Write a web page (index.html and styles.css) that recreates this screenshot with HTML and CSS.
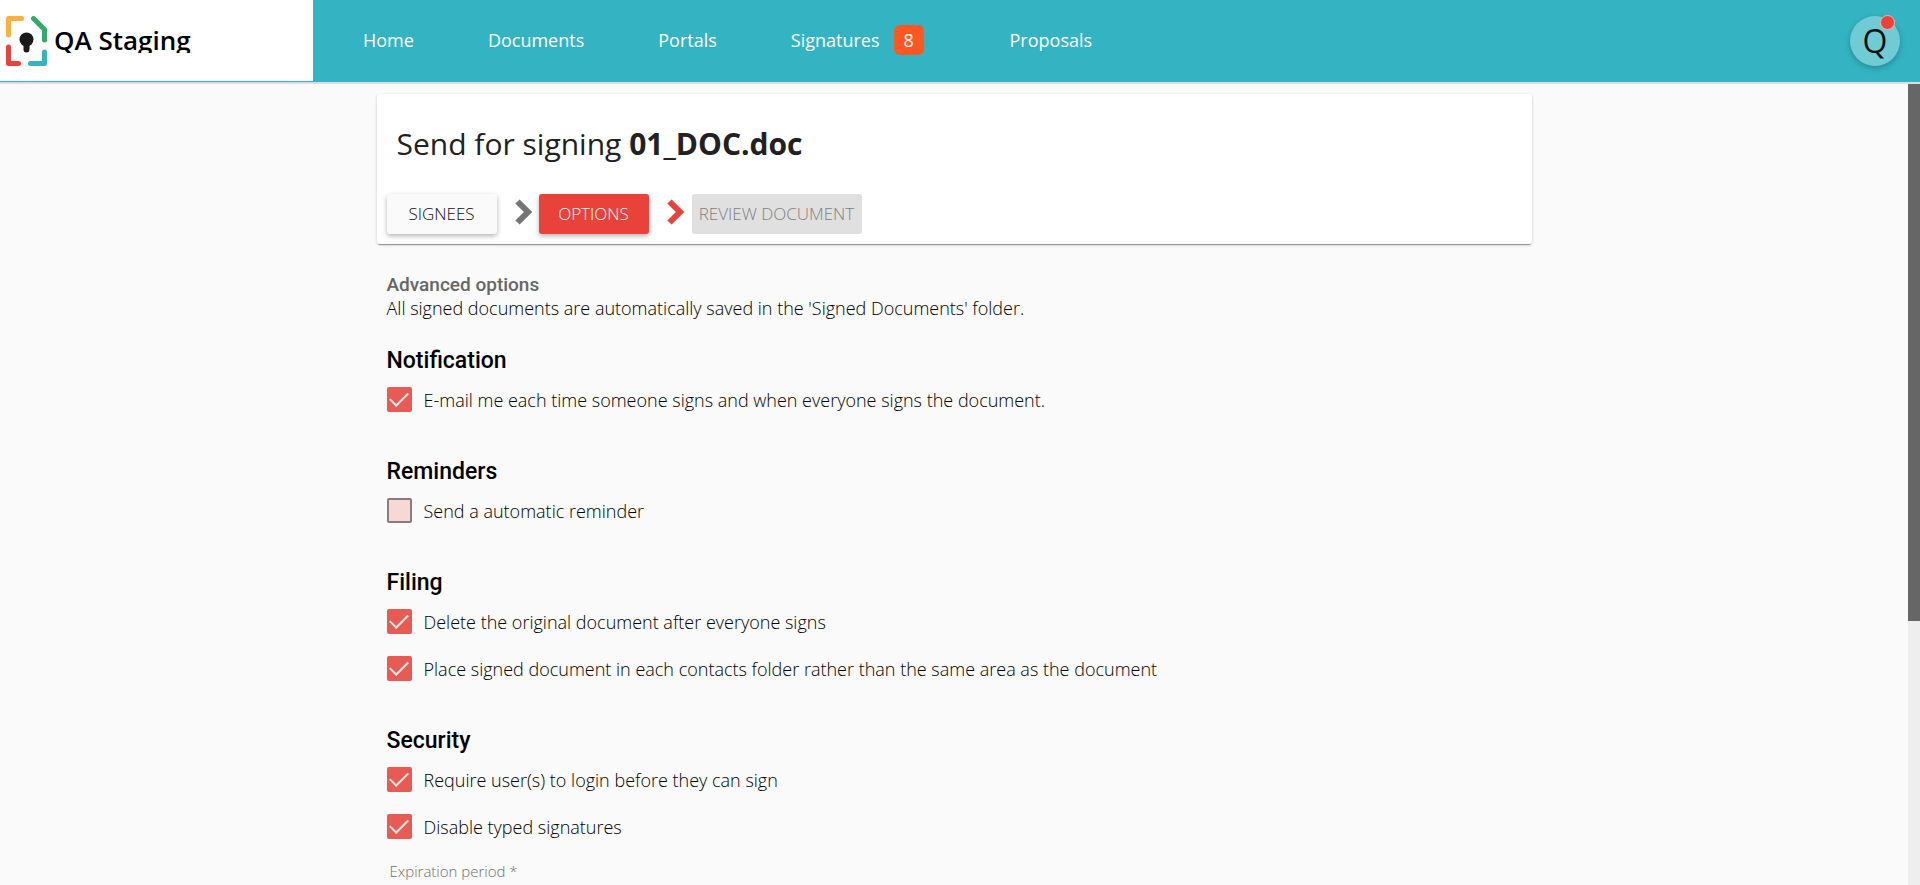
FILE: index.html
```html
<!DOCTYPE html>
<html lang="en">
<head>
<meta charset="utf-8">
<title>QA Staging - Send for signing</title>
<link rel="stylesheet" href="styles.css">
</head>
<body>
<header class="topbar">
  <a class="brand" href="#">
    <svg class="brand-logo" width="42" height="50" viewBox="0 0 42 50" fill="none" stroke-width="5" stroke-linecap="round" stroke-linejoin="round" aria-hidden="true">
      <path d="M2.500 19V2.500H15.500" stroke="#fbb040"/>
      <path d="M27.500 2.500L38.500 13.500V24" stroke="#2fac66"/>
      <path d="M2.500 31V47.500H12.500" stroke="#e8423b"/>
      <path d="M38.500 36V47.500H24.500" stroke="#34b4c3"/>
      <circle cx="20.500" cy="23.500" r="7" fill="#1a1a1a"/>
      <path d="M20.500 25V33.500" stroke="#1a1a1a" stroke-width="6"/>
    </svg>
    <span class="brand-name">QA Staging</span>
  </a>
  <nav class="nav">
    <a href="#">Home</a>
    <a href="#">Documents</a>
    <a href="#">Portals</a>
    <a href="#">Signatures <span class="count">8</span></a>
    <a href="#">Proposals</a>
  </nav>
  <button class="avatar" type="button" aria-label="Account">Q<span class="dot"></span></button>
</header>
<div class="viewport">
  <main class="page">
    <section class="card">
      <h1>Send for signing <strong>01_DOC.doc</strong></h1>
      <div class="steps">
        <button class="step" type="button">SIGNEES</button>
        <svg class="chevron" width="18" height="26" viewBox="0 0 18 26" fill="none" aria-hidden="true"><path d="M2.500 2.500L13 13L2.500 23.500" stroke="currentColor" stroke-width="6"/></svg>
        <button class="step step-current" type="button">OPTIONS</button>
        <svg class="chevron chevron-current" width="18" height="26" viewBox="0 0 18 26" fill="none" aria-hidden="true"><path d="M2.500 2.500L13 13L2.500 23.500" stroke="currentColor" stroke-width="6"/></svg>
        <button class="step step-disabled" type="button" disabled>REVIEW DOCUMENT</button>
      </div>
    </section>
    <form class="options">
      <h2>Advanced options</h2>
      <p class="intro">All signed documents are automatically saved in the 'Signed Documents' folder.</p>
      <section class="group">
        <h3>Notification</h3>
        <label class="check"><input type="checkbox" checked><span>E-mail me each time someone signs and when everyone signs the document.</span></label>
      </section>
      <section class="group">
        <h3>Reminders</h3>
        <label class="check"><input type="checkbox"><span>Send a automatic reminder</span></label>
      </section>
      <section class="group">
        <h3>Filing</h3>
        <label class="check"><input type="checkbox" checked><span>Delete the original document after everyone signs</span></label>
        <label class="check"><input type="checkbox" checked><span>Place signed document in each contacts folder rather than the same area as the document</span></label>
      </section>
      <section class="group">
        <h3>Security</h3>
        <label class="check"><input type="checkbox" checked><span>Require user(s) to login before they can sign</span></label>
        <label class="check"><input type="checkbox" checked><span>Disable typed signatures</span></label>
        <div class="field">
          <label for="expiration">Expiration period *</label>
          <input id="expiration" type="text">
        </div>
      </section>
    </form>
  </main>
  <div class="scroll-track"><div class="scroll-thumb"></div></div>
</div>
</body>
</html>
```
FILE: styles.css
```css
* { box-sizing: border-box; }

body {
  margin: 0;
  height: 100vh;
  display: flex;
  flex-direction: column;
  overflow: hidden;
  background: #fafafa;
  color: #000;
  font: 300 18px/24px "Open Sans", sans-serif;
}

h1, h2, h3, p { margin: 0; }

.topbar {
  flex: none;
  display: flex;
  align-items: stretch;
  height: 84px;
  border-bottom: 2px solid #ddd;
  background: #34b4c3;
}

.brand {
  display: flex;
  align-items: center;
  gap: 6px;
  width: 313px;
  margin-bottom: 1px;
  padding-left: 6px;
  background: #fff;
  color: #000;
  text-decoration: none;
}

.brand-name {
  height: 24px;
  overflow: hidden;
  font-size: 26px;
  font-weight: 600;
  line-height: 22px;
}

.nav {
  flex: 1;
  display: flex;
  align-items: center;
  gap: 74px;
  padding: 0 0 2px 50px;
}

.nav a {
  display: flex;
  align-items: center;
  color: #fff;
  font-weight: 400;
  text-decoration: none;
}

.count {
  width: 30px;
  margin: 0 12px 0 14px;
  border-radius: 6px;
  background: #ff5722;
  line-height: 30px;
  text-align: center;
}

.avatar {
  position: relative;
  align-self: center;
  width: 50px;
  height: 50px;
  margin-right: 20px;
  padding: 0;
  border: 0;
  border-radius: 50%;
  background: #71cbd5;
  box-shadow: 0 2px 6px rgba(0, 0, 0, 0.26);
  color: #111;
  font: 400 32px/50px "Open Sans", sans-serif;
}

.dot {
  position: absolute;
  top: -1px;
  right: 5px;
  width: 15px;
  height: 15px;
  border: 1px solid #f5b5b2;
  border-radius: 50%;
  background: #e8423b;
}

.viewport {
  flex: 1;
  min-height: 0;
  display: flex;
}

.page {
  flex: 1;
  max-width: 1155px;
  margin: 0 auto;
  padding-top: 10px;
}

.card {
  padding: 28px 10px 10px;
  border-radius: 3px;
  background: #fff;
  box-shadow: 0 1px 3px rgba(0, 0, 0, 0.2), 0 2px 1px -1px rgba(0, 0, 0, 0.35);
}

.card h1 {
  padding-left: 10px;
  color: #212121;
  font-size: 30px;
  font-weight: 400;
  line-height: 44px;
}

.card strong { font-weight: 700; }

.steps {
  display: flex;
  align-items: center;
  margin-top: 28px;
}

.step {
  min-width: 110px;
  height: 40px;
  padding: 0 7px;
  border: 0;
  border-radius: 3px;
  background: #fafafa;
  box-shadow: 0 2px 5px rgba(0, 0, 0, 0.3);
  color: #111;
  font: 300 17px/40px "Open Sans", sans-serif;
}

.step-current {
  background: #e8423b;
  color: #fff;
}

.step-disabled {
  min-width: 170px;
  background: #e0e0e0;
  box-shadow: none;
  color: #808080;
}

.chevron {
  margin: 0 6px 4px 18px;
  color: #757575;
}

.chevron-current {
  margin-right: 7px;
  color: #e8423b;
}

.options { padding: 29px 10px 0; }

.options h2 {
  color: #666;
  font: 500 19px/23px Roboto, sans-serif;
}

.intro { margin-bottom: 29px; }

.group { margin-bottom: 37px; }

.group h3 {
  margin-bottom: 3px;
  font: 500 23px/24px Roboto, sans-serif;
}

.check {
  display: flex;
  align-items: center;
  gap: 12px;
  height: 47px;
}

.check input {
  appearance: none;
  display: grid;
  place-items: center;
  width: 25px;
  height: 25px;
  margin: 0;
  border: 2px solid #8c7b7b;
  border-radius: 2px;
  background: #f6d8d6;
}

.check input:checked {
  border: 0;
  background: #e85b54;
}

.check input:checked::after {
  content: "";
  width: 8px;
  height: 16px;
  margin-bottom: 5px;
  border: solid #fde9e8;
  border-width: 0 2px 2px 0;
  transform: rotate(45deg);
}

.field {
  display: flex;
  flex-direction: column;
  padding: 11px 3px 0;
  color: #707070;
  font-size: 15px;
  line-height: 20px;
}

.field input {
  height: 30px;
  border: 0;
  border-bottom: 1px solid #ccc;
  background: transparent;
}

.scroll-track {
  width: 12px;
  background: #eee;
}

.scroll-thumb {
  height: 67%;
  background: #666;
}
```
